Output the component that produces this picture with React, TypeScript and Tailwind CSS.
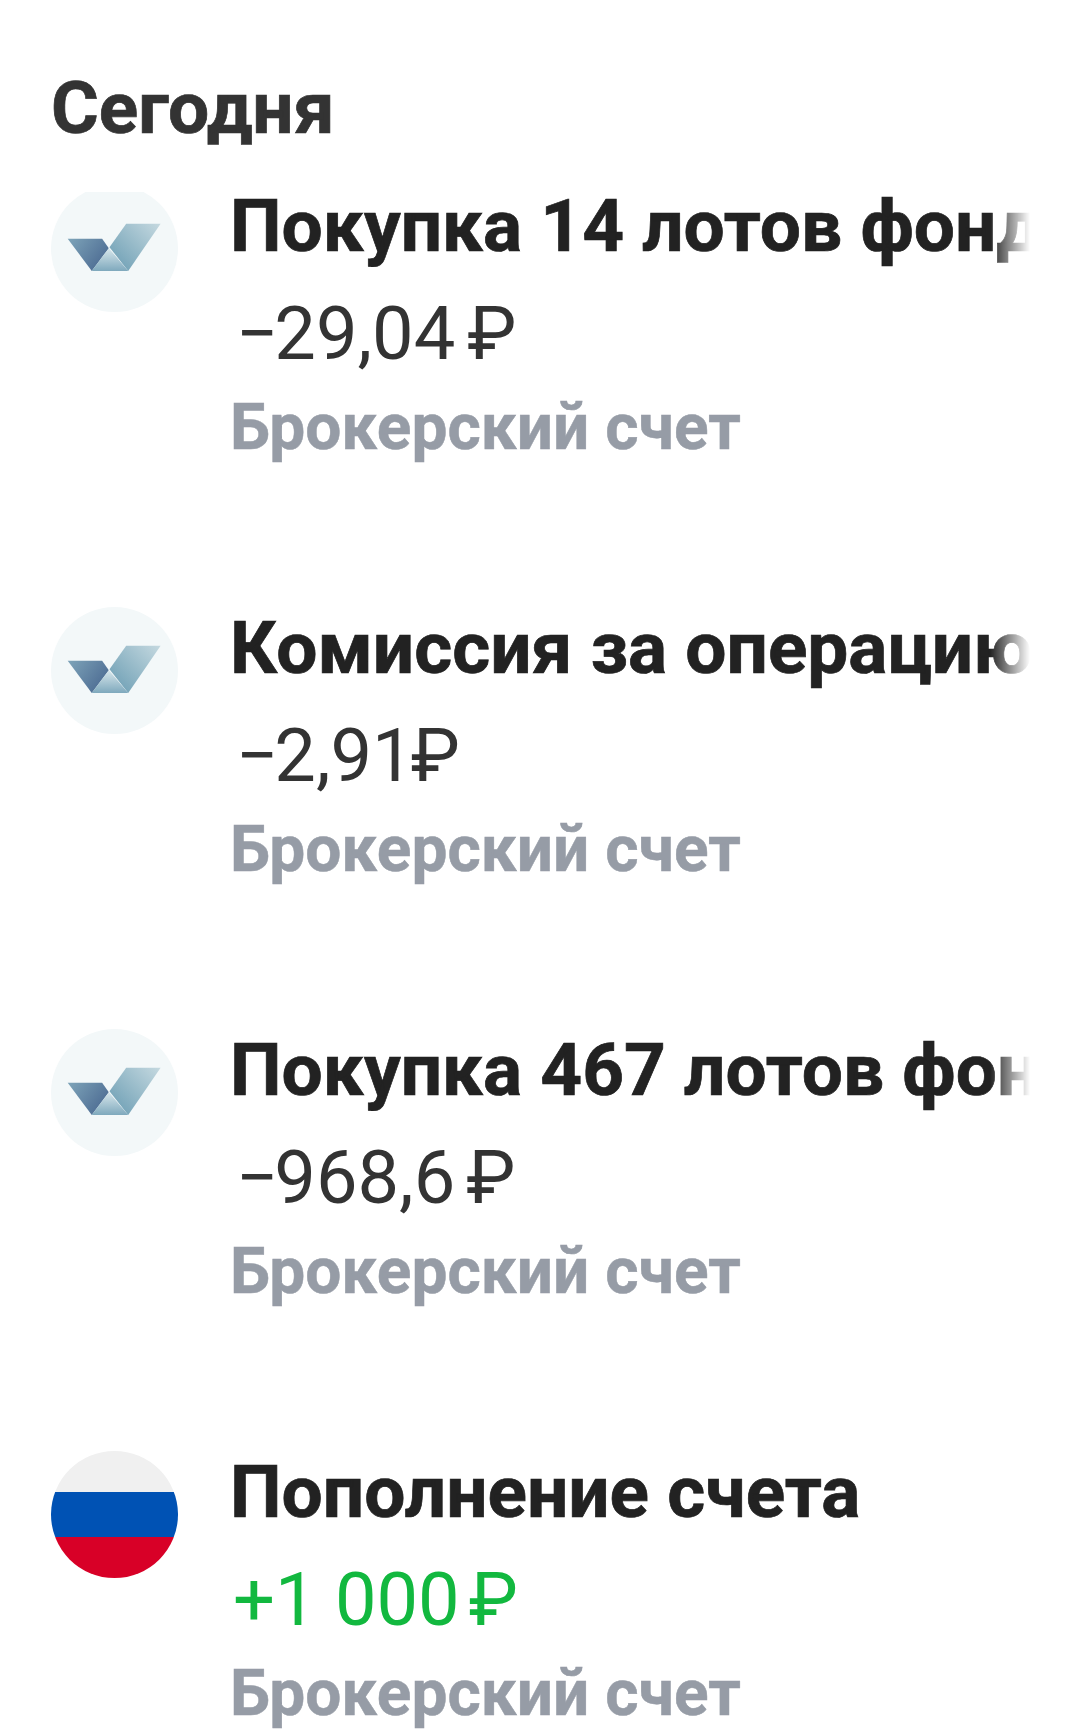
const font = "font-['Roboto',sans-serif]";

function BrokerLogo({ id }: { id: string }) {
  return (
    <svg viewBox="65 51 380 380" className="h-[127px] w-[127px] shrink-0">
      <defs>
        <linearGradient id={`${id}-a`} x1="0" y1="0" x2="1" y2="0.6">
          <stop offset="0" stopColor="#7ea4b9" />
          <stop offset="1" stopColor="#4d6c93" />
        </linearGradient>
        <linearGradient id={`${id}-b`} x1="1" y1="0" x2="0" y2="0.9">
          <stop offset="0" stopColor="#c5d9e0" />
          <stop offset="1" stopColor="#6b9db3" />
        </linearGradient>
        <linearGradient id={`${id}-c`} x1="0" y1="0" x2="0" y2="1">
          <stop offset="0" stopColor="#d8e7ec" />
          <stop offset="1" stopColor="#7fa9bd" />
        </linearGradient>
      </defs>
      <circle cx="255" cy="241" r="190" fill="#f3f8f9" />
      <g transform="translate(0 5)">
        <polygon points="115,207 218,207 238,235 187,303" fill={`url(#${id}-a)`} />
        <polygon points="290,162 393,162 296,303 240,232" fill={`url(#${id}-b)`} />
        <polygon points="238,235 296,303 187,303" fill={`url(#${id}-c)`} />
      </g>
    </svg>
  );
}

function FlagIcon() {
  return (
    <div className="flex h-[127px] w-[127px] shrink-0 flex-col overflow-hidden rounded-full">
      <div className="h-[41px] bg-[#f0f0f0]" />
      <div className="h-[45px] bg-[#0052b4]" />
      <div className="h-[41px] bg-[#d80027]" />
    </div>
  );
}

const rows = [
  { id: "r1", title: "Покупка 14 лотов фонда", sign: "−", amount: "29,04", gap: "ml-[12px]", green: false },
  { id: "r2", title: "Комиссия за операцию", sign: "−", amount: "2,91", gap: "-ml-[3px]", green: false },
  { id: "r3", title: "Покупка 467 лотов фонда", sign: "−", amount: "968,6", gap: "ml-[11px]", green: false },
  { id: "r4", title: "Пополнение счета", sign: "+", amount: "1 000", gap: "ml-[9px]", green: true },
];

export default function App() {
  return (
    <div className={`h-[1735px] w-[1080px] overflow-hidden bg-white ${font}`}>
      <h1 className="pl-[51px] pt-[67px] text-[73px] font-bold leading-[82px] text-[#333333] [-webkit-text-stroke:0.7px_#333333]">
        Сегодня
      </h1>
      <div className="mt-[43px] h-[1543px] overflow-hidden">
        <div className="-mt-[7px] flex flex-col gap-[130px] pl-[51px]">
          {rows.map((row) => (
            <div key={row.id} className="flex h-[292px] gap-[52px]">
              {row.id === "r4" ? <FlagIcon /> : <BrokerLogo id={row.id} />}
              <div className="w-[800px] min-w-0">
                <div className="overflow-hidden whitespace-nowrap text-[73px] font-bold leading-[82px] text-[#222222] [-webkit-text-stroke:0.7px_#222222] [mask-image:linear-gradient(to_right,#000_calc(100%-40px),transparent)]">
                  {row.title}
                </div>
                <div className={`pt-[26px] text-[74px] font-normal leading-[82px] ${row.green ? "pl-[3px] text-[#12b83f]" : "pl-[6px] text-[#333333]"}`}>
                  <span className={row.green ? "" : "mr-[-4px]"}>{row.sign}</span>
                  {row.amount}
                  <span className={row.gap}>₽</span>
                </div>
                <div className="pt-[12px] text-[64px] font-bold leading-[82px] text-[#969ca6] [-webkit-text-stroke:0.5px_#969ca6]">
                  Брокерский счет
                </div>
              </div>
            </div>
          ))}
        </div>
      </div>
    </div>
  );
}
